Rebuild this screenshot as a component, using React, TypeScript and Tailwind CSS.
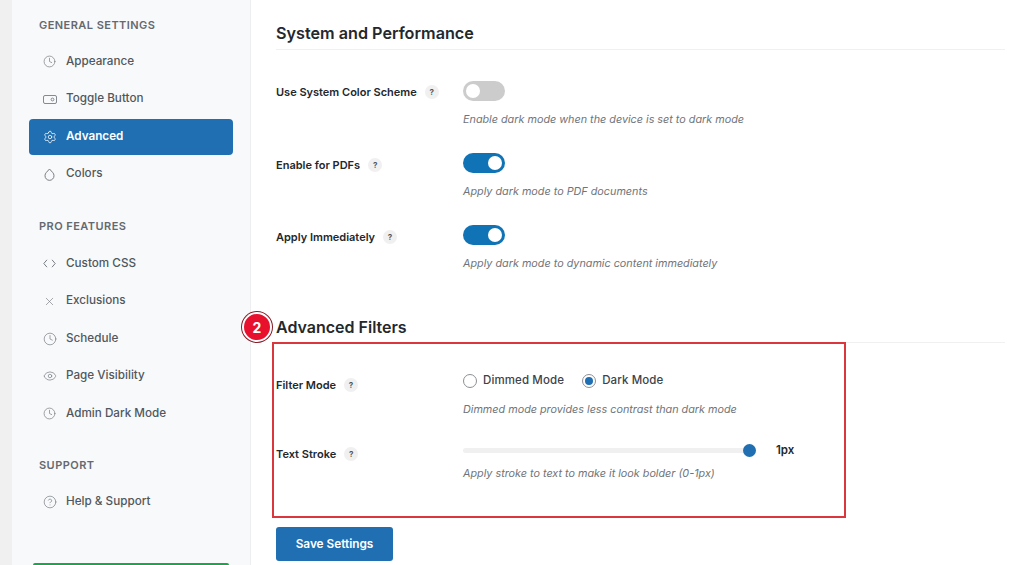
import React from "react";
import { Clock, Settings, X, Eye, CircleHelp } from "lucide-react";

const ClockSm = () => <Clock size={13} strokeWidth={1.3} />;

const ToggleIcon = () => (
  <svg width="14" height="9" viewBox="0 0 14 9" fill="none" stroke="currentColor" strokeWidth="0.9">
    <rect x="0.5" y="0.5" width="13" height="8" rx="1.5" />
    <circle cx="9.5" cy="4.5" r="1.4" />
  </svg>
);

const DropIcon = () => (
  <svg width="11" height="13" viewBox="0 0 11 13" fill="none" stroke="currentColor" strokeWidth="1">
    <path d="M5.5 1 L8.6 4.4 A4.5 4.6 0 1 1 2.4 4.4 Z" strokeLinejoin="round" />
  </svg>
);

const CodeIcon = () => (
  <svg width="13" height="9" viewBox="0 0 13 9" fill="none" stroke="currentColor" strokeWidth="1">
    <path d="M4 0.8 L0.8 4.5 L4 8.2 M9 0.8 L12.2 4.5 L9 8.2" />
  </svg>
);

function Item({ icon, label, active }: { icon: React.ReactNode; label: string; active?: boolean }) {
  return (
    <div
      className={
        active
          ? "flex h-[36px] items-center rounded-[4px] bg-[#1f6fb2] text-[11.7px] font-semibold text-white"
          : "flex h-[36px] items-center rounded-[4px] text-[11.7px] font-medium text-[#50575e]"
      }
    >
      <span className={active ? "flex w-[37px] justify-center pl-[4px] text-white" : "flex w-[37px] justify-center pl-[4px] text-[#787c82]"}>
        {icon}
      </span>
      <span>{label}</span>
    </div>
  );
}

function SectionLabel({ children, className }: { children: React.ReactNode; className: string }) {
  return (
    <div className={"pl-[10px] text-[11px] font-semibold tracking-[0.45px] text-[#646970] " + className}>{children}</div>
  );
}

function Help() {
  return (
    <span className="ml-[8px] flex h-[14px] w-[14px] items-center justify-center rounded-full bg-[#f0f0f1] text-[8px] font-bold text-[#50575e]">
      ?
    </span>
  );
}

function Toggle({ on }: { on?: boolean }) {
  return (
    <div
      className={
        on
          ? "flex h-[20px] w-[42px] items-center justify-end rounded-full bg-[#0f73b5] px-[3px]"
          : "flex h-[20px] w-[42px] items-center justify-start rounded-full bg-[#cccccc] px-[3px]"
      }
    >
      <div className="h-[14px] w-[14px] rounded-full bg-white" />
    </div>
  );
}

function Desc({ children }: { children: React.ReactNode }) {
  return <div className="text-[10.8px] italic leading-[14px] text-[#6f7479]">{children}</div>;
}

function Label({ text }: { text: string }) {
  return (
    <div className="flex w-[187px] shrink-0 items-center text-[11px] font-semibold text-[#23282d]">
      {text}
      <Help />
    </div>
  );
}

function ToggleRow({ label, on, desc, labelClass }: { label: string; on?: boolean; desc: string; labelClass: string }) {
  return (
    <div className="flex h-[72px] items-start">
      <div className={labelClass}>
        <Label text={label} />
      </div>
      <div>
        <Toggle on={on} />
        <div className="mt-[12px]">
          <Desc>{desc}</Desc>
        </div>
      </div>
    </div>
  );
}

function Radio({ label, on }: { label: string; on?: boolean }) {
  return (
    <div className="flex items-center gap-[6px] text-[11.5px] font-medium tracking-[0.01em] text-[#3c434a]">
      <span className="flex h-[14px] w-[14px] items-center justify-center rounded-full border border-[#8c8f94] bg-white">
        {on && <span className="h-[8px] w-[8px] rounded-full bg-[#1f6fb2]" />}
      </span>
      {label}
    </div>
  );
}

export default function App() {
  return (
    <div className="flex h-[565px] w-[1024px] overflow-hidden bg-white font-['Inter',sans-serif]">
      <div className="w-[12px] shrink-0 bg-[#f0f0f1]" />
      <aside className="relative flex h-[565px] w-[239px] shrink-0 flex-col border-r border-[#eceeef] bg-[#f8f9fa] pl-[17px] pr-[17px] pt-[17px]">
        <SectionLabel className="mb-[10px]">GENERAL SETTINGS</SectionLabel>
        <div className="flex flex-col gap-[1.5px]">
          <Item icon={<ClockSm />} label="Appearance" />
          <Item icon={<ToggleIcon />} label="Toggle Button" />
          <Item icon={<Settings size={14} strokeWidth={1.3} />} label="Advanced" active />
          <Item icon={<DropIcon />} label="Colors" />
        </div>
        <SectionLabel className="mb-[11px] mt-[26px]">PRO FEATURES</SectionLabel>
        <div className="flex flex-col gap-[1.5px]">
          <Item icon={<CodeIcon />} label="Custom CSS" />
          <Item icon={<X size={13} strokeWidth={1.2} />} label="Exclusions" />
          <Item icon={<Clock size={14} strokeWidth={1.2} />} label="Schedule" />
          <Item icon={<Eye size={14} strokeWidth={1.2} />} label="Page Visibility" />
          <Item icon={<ClockSm />} label="Admin Dark Mode" />
        </div>
        <SectionLabel className="mb-[11px] mt-[25px]">SUPPORT</SectionLabel>
        <Item icon={<CircleHelp size={14} strokeWidth={1.2} />} label="Help & Support" />
        <div className="mx-[4px] mt-auto h-[2px] rounded-t-[6px] bg-[#1aa64a]" />
      </aside>

      <main className="relative flex-1 pl-[25px] pr-[19px] pt-[23px]">
        <h2 className="h-[27px] border-b border-[#f0f0f1] text-[16.2px] font-semibold leading-[20px] text-[#23282d]">
          System and Performance
        </h2>
        <div className="mt-[31px]">
          <ToggleRow labelClass="pt-[3px]" label="Use System Color Scheme" desc="Enable dark mode when the device is set to dark mode" />
          <ToggleRow labelClass="pt-[4px]" label="Enable for PDFs" on desc="Apply dark mode to PDF documents" />
          <ToggleRow labelClass="pt-[4px]" label="Apply Immediately" on desc="Apply dark mode to dynamic content immediately" />
        </div>

        <div className="relative mt-[20px]">
          <span className="absolute left-[-34px] top-[-5px] flex h-[30px] w-[30px] items-center justify-center rounded-full border-2 border-white bg-[#e8112d] text-[14px] font-bold text-white shadow-[0_0_0_1px_#8a1c26]">
            2
          </span>
          <h2 className="h-[26px] border-b border-[#f0f0f1] text-[16px] font-semibold leading-[20px] text-[#23282d]">
            Advanced Filters
          </h2>
        </div>

        <div className="flex h-[69px] items-start pt-[29px]">
          <div className="pt-[5px]">
            <Label text="Filter Mode" />
          </div>
          <div className="flex flex-col">
            <div className="flex gap-[18px]">
              <Radio label="Dimmed Mode" />
              <Radio label="Dark Mode" on />
            </div>
            <div className="mt-[14px]">
              <Desc>Dimmed mode provides less contrast than dark mode</Desc>
            </div>
          </div>
        </div>

        <div className="mt-[30px] flex items-start">
          <div className="pt-[4px]">
            <Label text="Text Stroke" />
          </div>
          <div className="flex flex-col">
            <div className="flex items-center">
              <div className="relative h-[5px] w-[293px] rounded-full bg-[#f0f0f1]">
                <span className="absolute right-0 top-[-4px] h-[13px] w-[13px] rounded-full bg-[#1f6fb2]" />
              </div>
              <span className="ml-[20px] text-[11.5px] font-semibold text-[#23282d]">1px</span>
            </div>
            <div className="mt-[8px]">
              <Desc>Apply stroke to text to make it look bolder (0-1px)</Desc>
            </div>
          </div>
        </div>

        <button className="mt-[46px] h-[34px] w-[117px] rounded-[3px] bg-[#1f6fb2] pt-[1px] text-[11.8px] font-semibold text-white">
          Save Settings
        </button>

        <div className="pointer-events-none absolute left-[21px] top-[342px] h-[176px] w-[574px] border-2 border-[#d9363e]" />
      </main>
    </div>
  );
}
